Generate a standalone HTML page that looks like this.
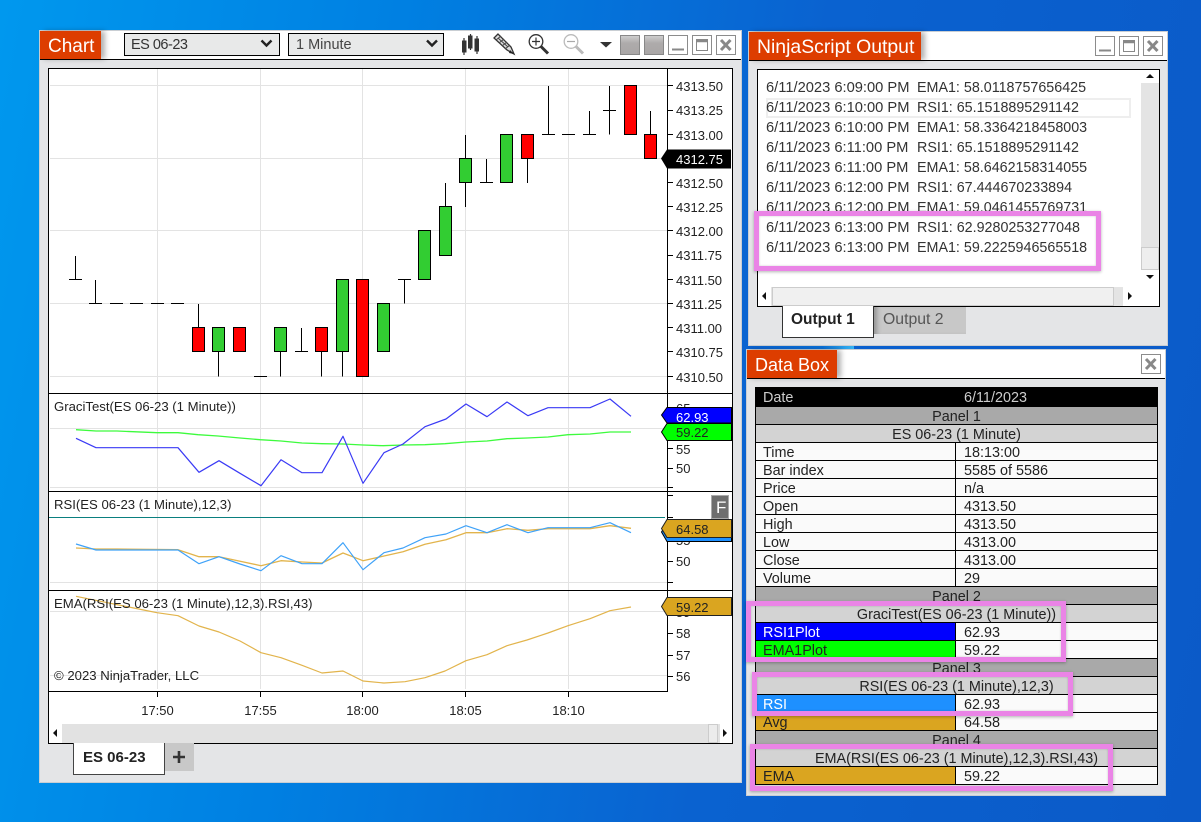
<!DOCTYPE html>
<html><head><meta charset="utf-8"><style>
html,body{margin:0;padding:0}
body{width:1201px;height:822px;overflow:hidden;position:relative;font-family:"Liberation Sans",Arial,sans-serif;background:linear-gradient(100deg,#0098ee 0,#0080e2 30%,#0a62d0 62%,#0b5ac8 100%)}
.a{position:absolute;box-sizing:border-box}
.win{background:#e4e5e7;border:1px solid #c9ced3}
.hd{background:#fff;border-bottom:1px solid #000}
.tt{background:#dd3d00;color:#fff;box-shadow:4px 0 5px rgba(0,0,0,.3);white-space:nowrap}
.l{position:absolute;white-space:pre;font-size:14.3px;color:#333;line-height:22px}
.d{font-size:14.7px}
.r{height:18px;display:flex;box-sizing:border-box;border-bottom:1px solid #000;font-size:14.4px;line-height:20px;color:#222;background:#fafafa}
.r b{font-weight:normal;width:200px;padding-left:7px;box-sizing:border-box;border-right:1px solid #000;height:17px;flex:none}
.r i{font-style:normal;padding-left:8px}
.p{background:#a9a9a9;display:block;text-align:center}
.s{background:#d3d3d3;display:block;text-align:center}
.pk{position:absolute;box-sizing:border-box;border:5px solid #ea84e6;box-shadow:0 1px 3px rgba(0,0,0,.3),inset 0 0 2px rgba(0,0,0,.2)}
svg{position:absolute;left:0;top:0}
svg text{font-family:"Liberation Sans",Arial,sans-serif;font-size:13px;fill:#222}
svg text.pl{font-size:13.15px}
</style></head><body>

<!-- background streak -->
<div class="a" style="left:749px;top:346px;width:105px;height:3px;background:linear-gradient(90deg,#0a62d0,#0a70d8 70%,#35b4f2)"></div>

<!-- CHART WINDOW -->
<div class="a win" style="left:39px;top:30px;width:703px;height:753px"></div>
<div class="a hd" style="left:40px;top:31px;width:701px;height:29px"></div>
<div class="a tt" style="left:40px;top:31px;width:61px;height:28px;font-size:19px;line-height:31px;padding-left:8px">Chart</div>
<div class="a" style="left:124px;top:33px;width:156px;height:23px;background:#e8e9e9;border:1px solid #000;font-size:14.5px;letter-spacing:-.5px;line-height:22px;color:#333;padding-left:6px">ES 06-23</div>
<div class="a" style="left:288px;top:33px;width:156px;height:23px;background:#e8e9e9;border:1px solid #000;font-size:14.5px;line-height:22px;color:#444;padding-left:7px">1 Minute</div>
<div class="a" style="left:48px;top:68px;width:685px;height:676px;background:#fff;border:1px solid #000"></div>

<svg width="1201" height="822" viewBox="0 0 1201 822">
<!-- toolbar -->
<path d="M261.5 40.500l5 5 5-5M427 40.500l5 5 5-5" fill="none" stroke="#222" stroke-width="2.400"/>
<g fill="#333" stroke="#333">
<path d="M464 38v17M470.500 34v16M477 36v18" stroke-width="1.200"/>
<rect x="462.500" y="41" width="3.500" height="11"/><rect x="468.500" y="36" width="3.500" height="12"/><rect x="475" y="39" width="3.500" height="12"/>
</g>
<path d="M498 34l-4 4 13 12 7 4-3-7z" fill="#ddd" stroke="#333" stroke-width="1.300"/>
<path d="M498 38l10 9M501 36l-5 4M504 39l-5 4M507 42l-5 4M510 45l-5 4" stroke="#444" stroke-width="1" fill="none"/>
<path d="M510 50l4 4-5-1z" fill="#222"/>
<circle cx="536" cy="41.500" r="6.800" fill="#fff" stroke="#333" stroke-width="1.300"/>
<path d="M532 41.500h8M536 37.500v8" stroke="#333" stroke-width="1.200"/>
<path d="M541 46.500l7 7" stroke="#333" stroke-width="3"/>
<circle cx="571" cy="41.500" r="6.800" fill="#fff" stroke="#bbb" stroke-width="1.300"/>
<path d="M567 41.500h8" stroke="#aaa" stroke-width="1.200"/>
<path d="M576 46.500l7 7" stroke="#bbb" stroke-width="3"/>
<path d="M600 42h12l-6 5.500z" fill="#333"/>
<defs><linearGradient id="g" x1="0" y1="0" x2="0" y2="1"><stop offset="0" stop-color="#d0d0d0"/><stop offset=".4" stop-color="#aeabab"/><stop offset="1" stop-color="#a9a6a6"/></linearGradient></defs>
<rect x="620.500" y="35.500" width="19" height="19" fill="url(#g)" stroke="#888"/>
<rect x="644.500" y="35.500" width="19" height="19" fill="url(#g)" stroke="#888"/>
<g fill="#fff" stroke="#8c8c8c">
<rect x="668.500" y="35.500" width="19" height="19"/><rect x="692.500" y="35.500" width="19" height="19"/><rect x="716.500" y="35.500" width="19" height="19"/>
<rect x="1095.500" y="36.500" width="19" height="19"/><rect x="1119.500" y="36.500" width="19" height="19"/><rect x="1143.500" y="36.500" width="19" height="19"/>
<rect x="1141.500" y="354.500" width="19" height="19"/>
</g>
<g fill="none" stroke="#888">
<path d="M672 49.500h12" stroke-width="2"/><path d="M696.500 39.500h11v11h-11z"/><path d="M696.500 41h11" stroke-width="2.500"/>
<path d="M721 40l9.500 10M730.500 40l-9.500 10" stroke-width="3"/>
<path d="M1099 50.500h12" stroke-width="2"/><path d="M1123.500 40.500h11v11h-11z"/><path d="M1123.500 42h11" stroke-width="2.500"/>
<path d="M1148 41l9.500 10M1157.500 41l-9.500 10" stroke-width="3"/>
<path d="M1146 359l9.500 10M1155.500 359l-9.500 10" stroke-width="3"/>
</g>

<!-- grid -->
<path d="M157.500 69V689M260.500 69V689M362.500 69V689M465.500 69V689M568.500 69V689
M50 85.500H667M50 158.500H667M50 230.500H667M50 303.500H667M50 376.500H667
M50 428.500H667M50 487.500H667M50 582.500H667M50 611.500H667M50 675.500H667" stroke="#e3e3e3" fill="none"/>

<!-- wicks -->
<path d="M75.500 256V279.500M69 279.500H82M95.500 280V303.500M89 303.500H102M110 303.500H123M130 303.500H143M151 303.500H164M171 303.500H184
M198.500 304V327.500M218.500 351.500V376.500M254 376.500H267M280.500 351.500V376.500M301.500 328V351.500M295 351.500H308M321.500 351.500V376.500M342.500 351.500V376.500
M404.500 279.500V303.500M398 279.500H411M445.500 183V206.500M465.500 135V158.500M465.500 182.500V207M486.500 159V182.500M480 182.500H493M527.500 158.500V183
M548.500 86V134.500M542 134.500H555M562 134.500H575M589.500 111V134.500M583 134.500H596M609.500 86V134.500M603 110.500H616M650.500 111V134.500" stroke="#000" fill="none"/>
<!-- bodies -->
<g stroke="#000" fill="#32cd32">
<rect x="212.500" y="327.500" width="12" height="24"/>
<rect x="274.500" y="327.500" width="12" height="24"/>
<rect x="336.500" y="279.500" width="12" height="72"/>
<rect x="377.500" y="303.500" width="12" height="48"/>
<rect x="418.500" y="230.500" width="12" height="49"/>
<rect x="439.500" y="206.500" width="12" height="49"/>
<rect x="459.500" y="158.500" width="12" height="24"/>
<rect x="500.500" y="134.500" width="12" height="48"/>
</g>
<g stroke="#000" fill="#f00">
<rect x="192.500" y="327.500" width="12" height="24"/>
<rect x="233.500" y="327.500" width="12" height="24"/>
<rect x="315.500" y="327.500" width="12" height="24"/>
<rect x="356.500" y="279.500" width="12" height="97"/>
<rect x="521.500" y="134.500" width="12" height="24"/>
<rect x="624.500" y="85.500" width="12" height="49"/>
<rect x="644.500" y="134.500" width="12" height="24"/>
</g>

<!-- panel lines -->
<path d="M49 393.500H732M49 491.500H732M49 590.500H732M49 691.500H668M667.500 69V692" stroke="#000" fill="none"/>
<path d="M49 517.500H665" stroke="#0a7f7f" fill="none"/>

<!-- axis ticks -->
<path d="M668 85.500h5M668 110.500h5M668 134.500h5M668 158.500h5M668 182.500h5M668 206.500h5M668 230.500h5M668 255.500h5M668 279.500h5M668 303.500h5M668 327.500h5M668 351.500h5M668 376.500h5
M668 408.500h5M668 428.500h5M668 448.500h5M668 468.500h5M668 487.500h5
M668 495.500h5M668 517.500h5M668 539.500h5M668 561.500h5M668 582.500h5
M668 611.500h5M668 633.500h5M668 655.500h5M668 676.500h5
M157.500 692v5M260.500 692v5M362.500 692v5M465.500 692v5M568.500 692v5" stroke="#000" fill="none"/>

<!-- axis labels -->
<text x="676" y="91">4313.50</text><text x="676" y="115">4313.25</text><text x="676" y="140">4313.00</text>
<text x="676" y="188">4312.50</text><text x="676" y="212">4312.25</text><text x="676" y="236">4312.00</text><text x="676" y="260">4311.75</text><text x="676" y="285">4311.50</text><text x="676" y="309">4311.25</text><text x="676" y="333">4311.00</text><text x="676" y="357">4310.75</text><text x="676" y="382">4310.50</text>
<text x="676" y="413">65</text><text x="676" y="454">55</text><text x="676" y="473">50</text>
<text x="676" y="545">55</text><text x="676" y="566">50</text>
<text x="676" y="617">59</text><text x="676" y="638">58</text><text x="676" y="660">57</text><text x="676" y="681">56</text>
<text x="157.500" y="715" text-anchor="middle">17:50</text><text x="260.500" y="715" text-anchor="middle">17:55</text><text x="362.500" y="715" text-anchor="middle">18:00</text><text x="465.500" y="715" text-anchor="middle">18:05</text><text x="568.500" y="715" text-anchor="middle">18:10</text>

<!-- indicators -->
<g fill="none" stroke-linejoin="round">
<polyline stroke="#3dfb3d" stroke-width="1.300" points="76,429.700 96,431 117,431 157,432.700 178,432.700 198,434.700 218,436 240,438 260,439.700 281,441 302,443 322,443.700 343,444 363,445 383,445.700 403,445 425,444.700 445,443.700 466,442 487,441 507,438.700 527,438 548,437 568,434.700 590,434 610,432 631,432"/>
<polyline stroke="#3a3af5" stroke-width="1.200" points="76,438.300 96,447.700 178,447.700 199,472.300 219,460.700 240,473.300 261,485.700 281,459.700 302,472.700 322,472.700 343,436.300 363,483.300 384,452.700 403,444 425,426.700 446,419 466,404 487,416.700 507,402 528,415.700 548,407.700 590,407.700 610,399 631,416.300"/>
<polyline stroke="#e2b44c" stroke-width="1.300" points="76,548 96,549 117,549 178,549.700 199,556.700 219,556.700 261,565.700 281,560.700 302,562 322,563 343,553 363,560.700 384,556 403,551.700 425,544.300 446,539.700 466,532.700 487,532.700 507,528.700 528,530.300 548,528.700 590,528.700 610,525.700 631,528.300"/>
<polyline stroke="#3fa2f8" stroke-width="1.200" points="76,544 96,550 178,550 199,563.700 219,556.700 240,564 261,570.700 281,555.700 302,563.700 322,563.700 343,542.700 363,569.700 384,552.700 403,548 425,537.700 446,534 466,525.700 487,532.700 507,524.700 528,532.700 548,527.700 590,527.700 610,522.700 631,532.700"/>
<polyline stroke="#e2b44c" stroke-width="1.200" points="76,596.300 146,610.500 157,612.700 178,615.700 199,626 219,632 240,641 261,652.700 281,657.700 302,665.300 322,673 343,671 363,681 384,683 405,681.700 425,677.700 445,671 466,660.700 487,654.700 507,645.700 527,640 548,633 568,625.700 590,618.700 610,610.700 631,607"/>
</g>

<!-- panel text -->
<text class="pl" x="54" y="411">GraciTest(ES 06-23 (1 Minute))</text>
<text class="pl" x="54" y="509">RSI(ES 06-23 (1 Minute),12,3)</text>
<text class="pl" x="54" y="608">EMA(RSI(ES 06-23 (1 Minute),12,3).RSI,43)</text>
<text class="pl" x="54" y="680">© 2023 NinjaTrader, LLC</text>

<!-- price markers -->
<path d="M661 158.500l6-9h64v19h-64z" fill="#000"/>
<text x="676" y="164" style="fill:#fff">4312.75</text>
<path d="M661.500 415l5.500-7.500h64.500v15.500h-64.500z" fill="#00f" stroke="#000"/>
<text x="676" y="422" style="fill:#fff">62.93</text>
<path d="M661.500 432l5.500-8.500h64.500v17h-64.500z" fill="#0f0" stroke="#000"/>
<text x="676" y="437">59.22</text>
<path d="M661.500 532l5.500-9h64.500v18.500h-64.500z" fill="#1e90ff" stroke="#000"/>
<path d="M661.500 528.500l5.500-9h64.500v18h-64.500z" fill="#daa520" stroke="#222"/>
<text x="676" y="534">64.58</text>
<path d="M661.500 606.500l5.500-9h64.500v18h-64.500z" fill="#daa520" stroke="#222"/>
<text x="676" y="612">59.22</text>
<rect x="711.500" y="495.500" width="17" height="23" fill="#6e6e6e" stroke="#aaa"/>
<text x="716" y="513" style="fill:#fff;font-size:17px">F</text>
</svg>

<!-- chart scrollbar -->
<div class="a" style="left:49px;top:724px;width:683px;height:19px;background:#e2e2e2"></div>
<div class="a" style="left:49px;top:724px;width:13px;height:19px;background:#fff"></div>
<div class="a" style="left:53px;top:729px;border:4.500px solid transparent;border-left:0;border-right:4.500px solid #111"></div>
<div class="a" style="left:708px;top:724px;width:10px;height:19px;background:#ececec;border:1px solid #ccc"></div>
<div class="a" style="left:720px;top:724px;width:12px;height:19px;background:#fff"></div>
<div class="a" style="left:723px;top:729px;border:4.500px solid transparent;border-right:0;border-left:4.500px solid #111"></div>
<!-- chart tabs -->
<div class="a" style="left:73px;top:743px;width:92px;height:32px;background:#fff;border:1px solid #444;border-top:0;font-weight:bold;font-size:15px;line-height:29px;color:#222;padding-left:9px">ES 06-23</div>
<div class="a" style="left:165px;top:743px;width:29px;height:28px;background:#c8c8c8"></div>
<svg width="1201" height="822" style="pointer-events:none"><path d="M173 757h12M179 751v12" stroke="#333" stroke-width="2.600"/></svg>

<!-- NINJASCRIPT OUTPUT -->
<div class="a win" style="left:748px;top:31px;width:420px;height:315px;z-index:-1"></div>
<div class="a hd" style="left:749px;top:32px;width:418px;height:29px;z-index:-1"></div>
<div class="a tt" style="left:749px;top:32px;width:172px;height:28px;font-size:19.4px;line-height:30px;padding-left:8px">NinjaScript Output</div>
<div class="a" style="left:757px;top:69px;width:403px;height:238px;background:#fff;border:1px solid #000"></div>
<div class="a" style="left:766px;top:98px;width:365px;height:20px;border:2px solid #eee"></div>
<div class="l d" style="left:766px;top:77px">6/11/2023 6:09:00 PM</div><div class="l" style="left:917px;top:77px">EMA1: 58.0118757656425</div>
<div class="l d" style="left:766px;top:97px">6/11/2023 6:10:00 PM</div><div class="l" style="left:917px;top:97px">RSI1: 65.1518895291142</div>
<div class="l d" style="left:766px;top:117px">6/11/2023 6:10:00 PM</div><div class="l" style="left:917px;top:117px">EMA1: 58.3364218458003</div>
<div class="l d" style="left:766px;top:137px">6/11/2023 6:11:00 PM</div><div class="l" style="left:917px;top:137px">RSI1: 65.1518895291142</div>
<div class="l d" style="left:766px;top:157px">6/11/2023 6:11:00 PM</div><div class="l" style="left:917px;top:157px">EMA1: 58.6462158314055</div>
<div class="l d" style="left:766px;top:177px">6/11/2023 6:12:00 PM</div><div class="l" style="left:917px;top:177px">RSI1: 67.444670233894</div>
<div class="l d" style="left:766px;top:197px">6/11/2023 6:12:00 PM</div><div class="l" style="left:917px;top:197px">EMA1: 59.0461455769731</div>
<div class="a pk" style="left:754px;top:211px;width:347px;height:60px;background:#fff"></div>
<div class="l d" style="left:766px;top:217px">6/11/2023 6:13:00 PM</div><div class="l" style="left:917px;top:217px">RSI1: 62.9280253277048</div>
<div class="l d" style="left:766px;top:237px">6/11/2023 6:13:00 PM</div><div class="l" style="left:917px;top:237px">EMA1: 59.2225946565518</div>
<!-- v scroll -->
<div class="a" style="left:1141px;top:83px;width:18px;height:164px;background:#e4e4e4"></div>
<div class="a" style="left:1141px;top:247px;width:18px;height:23px;background:#eee;border:1px solid #ccc"></div>
<div class="a" style="left:1146px;top:74px;border:4.500px solid transparent;border-top:0;border-bottom:4.500px solid #111"></div>
<div class="a" style="left:1146px;top:275px;border:4.500px solid transparent;border-bottom:0;border-top:4.500px solid #111"></div>
<!-- h scroll -->
<div class="a" style="left:771px;top:287px;width:352px;height:19px;background:#e4e4e4"></div>
<div class="a" style="left:772px;top:287px;width:342px;height:19px;background:#f0f0f0;border:1px solid #ccc"></div>
<div class="a" style="left:762px;top:292px;border:4.500px solid transparent;border-left:0;border-right:4.500px solid #111"></div>
<div class="a" style="left:1128px;top:292px;border:4.500px solid transparent;border-right:0;border-left:4.500px solid #111"></div>
<!-- tabs -->
<div class="a" style="left:874px;top:307px;width:92px;height:27px;background:#c8c8c8;font-size:15.800px;line-height:26px;color:#555;padding-left:9px;box-shadow:inset 6px 0 5px -3px rgba(0,0,0,.25)">Output 2</div>
<div class="a" style="left:782px;top:306px;width:92px;height:32px;background:#fff;border:1px solid #333;border-top:0;font-weight:bold;font-size:15.500px;line-height:28px;color:#222;padding-left:8px">Output 1</div>

<!-- DATA BOX -->
<div class="a win" style="left:746px;top:349px;width:420px;height:447px;z-index:-1"></div>
<div class="a hd" style="left:747px;top:350px;width:418px;height:29px;z-index:-1"></div>
<div class="a tt" style="left:747px;top:350px;width:90px;height:28px;font-size:18px;line-height:30px;padding-left:8px">Data Box</div>
<div class="a" style="left:755px;top:387px;width:403px;border:1px solid #000;border-top:0;border-bottom:0">
<div class="r" style="height:20px;background:#000;color:#ccc;line-height:23px;border:0"><b style="border:0;height:20px">Date</b><i>6/11/2023</i></div>
<div class="r p">Panel 1</div>
<div class="r s">ES 06-23 (1 Minute)</div>
<div class="r"><b>Time</b><i>18:13:00</i></div>
<div class="r"><b>Bar index</b><i>5585 of 5586</i></div>
<div class="r"><b>Price</b><i>n/a</i></div>
<div class="r"><b>Open</b><i>4313.50</i></div>
<div class="r"><b>High</b><i>4313.50</i></div>
<div class="r"><b>Low</b><i>4313.00</i></div>
<div class="r"><b>Close</b><i>4313.00</i></div>
<div class="r"><b>Volume</b><i>29</i></div>
<div class="r p">Panel 2</div>
<div class="r s">GraciTest(ES 06-23 (1 Minute))</div>
<div class="r"><b style="background:#00f;color:#fff">RSI1Plot</b><i>62.93</i></div>
<div class="r"><b style="background:#0f0">EMA1Plot</b><i>59.22</i></div>
<div class="r p">Panel 3</div>
<div class="r s">RSI(ES 06-23 (1 Minute),12,3)</div>
<div class="r"><b style="background:#1e90ff;color:#fff">RSI</b><i>62.93</i></div>
<div class="r"><b style="background:#daa520">Avg</b><i>64.58</i></div>
<div class="r p">Panel 4</div>
<div class="r s">EMA(RSI(ES 06-23 (1 Minute),12,3).RSI,43)</div>
<div class="r"><b style="background:#daa520">EMA</b><i>59.22</i></div>
</div>
<div class="pk" style="left:746px;top:601px;width:320px;height:61px"></div>
<div class="pk" style="left:752px;top:672px;width:321px;height:44px"></div>
<div class="pk" style="left:750px;top:744px;width:363px;height:47px"></div>
</body></html>
